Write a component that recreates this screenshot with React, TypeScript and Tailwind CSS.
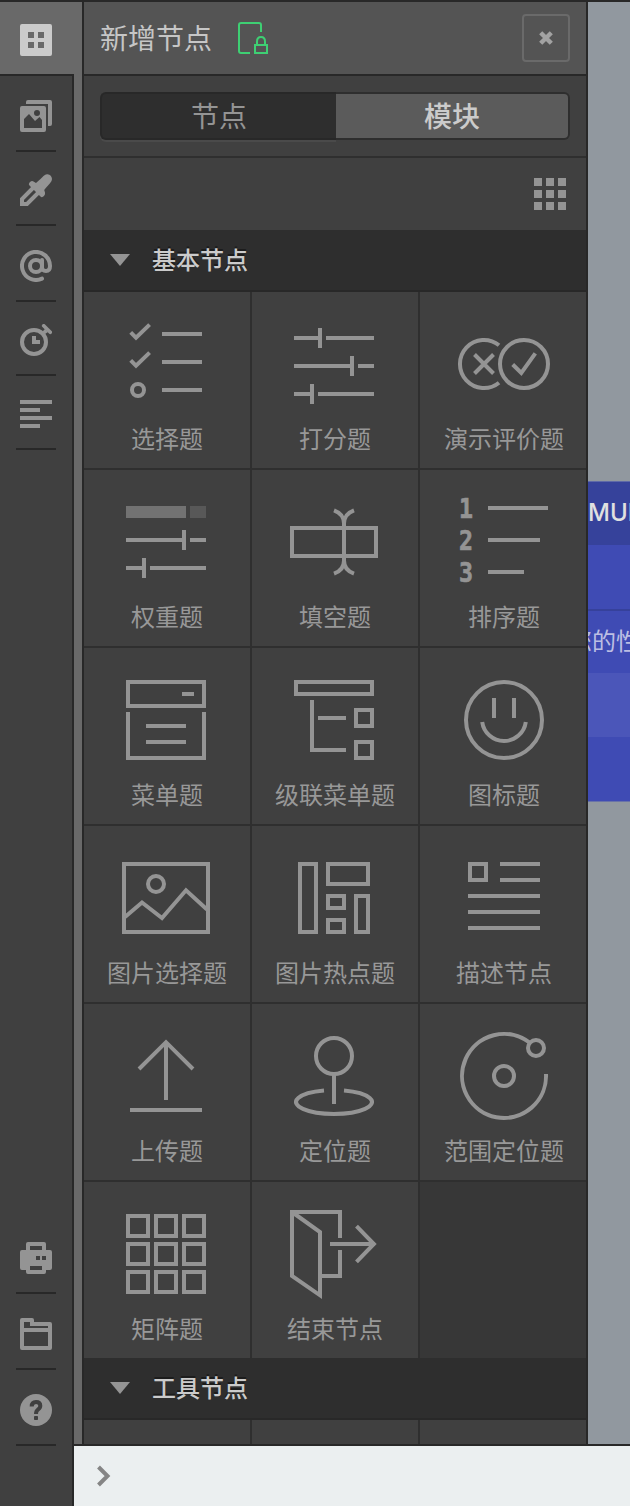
import React from "react";

const Stroke = ({ children }: { children: React.ReactNode }) => (
  <svg width="96" height="96" viewBox="0 0 96 96" fill="none" stroke="#949494" strokeWidth="4" className="block shrink-0">
    {children}
  </svg>
);

const matrix = [9, 37, 65];

const tiles: { label: string; icon: React.ReactNode }[] = [
  {
    label: "选择题",
    icon: (
      <>
        <path d="M11.7 16.4L17 21.6L30.6 8.6M11.7 44.4L17 49.6L30.6 36.6M43 18H83M43 46H83M43 74H83" />
        <circle cx="19" cy="74" r="6" />
      </>
    ),
  },
  {
    label: "打分题",
    icon: <path d="M7 22H33M33 12V32M39 22H87M7 50H65M65 40V60M71 50H87M7 78H25M25 68V88M31 78H87" />,
  },
  {
    label: "演示评价题",
    icon: (
      <>
        <path d="M44 29.3A24 24 0 1 0 44 66.7M19.5 38.5L38.5 57.5M38.5 38.5L19.5 57.5M57.7 48.5L66.3 57L80.3 37.3" />
        <circle cx="69" cy="48" r="24" />
      </>
    ),
  },
  {
    label: "权重题",
    icon: (
      <>
        <path d="M7 18H67" strokeWidth="12" stroke="#727272" />
        <path d="M71 18H87" strokeWidth="12" stroke="#585858" />
        <path d="M7 46H65M65 36V56M71 46H87M7 74H25M25 64V84M31 74H87" />
      </>
    ),
  },
  {
    label: "填空题",
    icon: (
      <>
        <rect x="5" y="34" width="84" height="28" />
        <path d="M47 16.3C53 18.5 57 22.5 57 29.5V66.5C57 73.5 53 77.5 47 79.7M67 16.3C61 18.5 57 22.5 57 29.5M67 79.7C61 77.5 57 73.5 57 66.5" />
      </>
    ),
  },
  {
    label: "排序题",
    icon: (
      <>
        <g fill="#949494" strokeWidth="0.7" fontFamily="'DejaVu Sans Mono', monospace" fontWeight="700" fontSize="27">
          <text x="4" y="24" textLength="14" lengthAdjust="spacingAndGlyphs">1</text>
          <text x="4" y="56" textLength="14" lengthAdjust="spacingAndGlyphs">2</text>
          <text x="4" y="88" textLength="14" lengthAdjust="spacingAndGlyphs">3</text>
        </g>
        <path d="M33 14H93M33 46H85M33 78H69" />
      </>
    ),
  },
  {
    label: "菜单题",
    icon: (
      <>
        <rect x="9" y="10" width="76" height="24" />
        <path d="M63 22H75M9 40V86H85V40M27 54H67M27 70H67" />
      </>
    ),
  },
  {
    label: "级联菜单题",
    icon: (
      <>
        <rect x="9" y="10" width="76" height="12" />
        <rect x="69" y="38" width="16" height="16" />
        <rect x="69" y="70" width="16" height="16" />
        <path d="M25 28V78H59M31 46H59" />
      </>
    ),
  },
  {
    label: "图标题",
    icon: (
      <>
        <circle cx="49" cy="48" r="38" />
        <path d="M39 26V46M59 26V46M27.2 50A22 22 0 0 0 70.8 50" />
      </>
    ),
  },
  {
    label: "图片选择题",
    icon: (
      <>
        <rect x="5" y="14" width="84" height="68" />
        <circle cx="37" cy="34" r="8" />
        <path d="M6 67L23 52.5L43 68L67 40.3L88 59.5" />
      </>
    ),
  },
  {
    label: "图片热点题",
    icon: (
      <>
        <rect x="13" y="14" width="16" height="68" />
        <rect x="41" y="14" width="40" height="20" />
        <rect x="41" y="46" width="16" height="12" />
        <rect x="41" y="70" width="16" height="12" />
        <rect x="69" y="46" width="12" height="36" />
      </>
    ),
  },
  {
    label: "描述节点",
    icon: (
      <>
        <rect x="15" y="14" width="16" height="16" />
        <path d="M45 14H85M45 30H85M13 46H85M13 62H85M13 78H85" />
      </>
    ),
  },
  {
    label: "上传题",
    icon: <path d="M20 41L47 14.2L74 41M47 14V72M11 82H83" />,
  },
  {
    label: "定位题",
    icon: (
      <>
        <circle cx="47" cy="28" r="18" />
        <path d="M47 46V76M37 62.4A38 12 0 1 0 57 62.4" />
      </>
    ),
  },
  {
    label: "范围定位题",
    icon: (
      <>
        <circle cx="49" cy="48" r="10" />
        <circle cx="81" cy="20" r="8" />
        <path d="M91 46A42 42 0 1 1 74.5 14.5" />
      </>
    ),
  },
  {
    label: "矩阵题",
    icon: (
      <>
        {matrix.map((x) => matrix.map((y) => <rect key={`${x}-${y}`} x={x} y={y + 1} width="20" height="20" />))}
      </>
    ),
  },
  {
    label: "结束节点",
    icon: (
      <>
        <path d="M5 6L33 26V89.3L5 70V4" />
        <path d="M3 6H53V32M53 44V70H35M43 38H86M69.5 20.2L86.9 38L69.5 55.8" />
      </>
    ),
  },
];

const SideIcon = ({ children }: { children: React.ReactNode }) => (
  <svg width="32" height="32" viewBox="0 0 32 32" fill="#949494" className="block">
    {children}
  </svg>
);

const SideItem = ({ tall, children }: { tall?: boolean; children: React.ReactNode }) => (
  <button
    className={
      tall
        ? "flex h-[76px] w-10 shrink-0 justify-center border-b-2 border-[#282828] pt-6"
        : "flex h-[74px] w-10 shrink-0 justify-center border-b-2 border-[#282828] pt-[22px]"
    }
  >
    <SideIcon>{children}</SideIcon>
  </button>
);

const SectionHeader = ({ title }: { title: string }) => (
  <div className="flex h-[62px] shrink-0 items-center border-b-2 border-[#282828] bg-[#2e2e2e] pl-[26px]">
    <svg width="20" height="12" viewBox="0 0 20 12" className="block">
      <path d="M0 0H20L10 12Z" fill="#949494" />
    </svg>
    <span className="ml-[22px] pb-0.5 text-2xl leading-[58px] font-medium text-[#cbcbcb] [text-shadow:0_-2px_0_#1c1c1c]">{title}</span>
  </div>
);

const Sidebar = () => (
  <nav className="flex w-[74px] shrink-0 flex-col bg-[#696969]">
    <div className="flex h-[74px] shrink-0 justify-start border-b-2 border-[#282828] bg-[#696969] pt-[22px] pl-5">
      <svg width="32" height="32" viewBox="0 0 32 32">
        <path
          fillRule="evenodd"
          fill="#cbcbcb"
          d="M2 0H30Q32 0 32 2V30Q32 32 30 32H2Q0 32 0 30V2Q0 0 2 0ZM8 8V14H14V8ZM18 8V14H24V8ZM8 18V24H14V18ZM18 18V24H24V18Z"
        />
      </svg>
    </div>
    <div className="flex grow flex-col items-center border-r-2 border-[#282828] bg-[#404040]">
      <SideItem tall>
        <path d="M6 4V2Q6 0 8 0H30Q32 0 32 2V24Q32 26 30 26H28V4Z" />
        <path
          fillRule="evenodd"
          d="M2 6H24Q26 6 26 8V30Q26 32 24 32H2Q0 32 0 30V8Q0 6 2 6ZM4 28H22V20L19.5 17L15 21L9 14L4 19ZM17 10A3 3 0 1 0 17 16A3 3 0 1 0 17 10Z"
        />
      </SideItem>
      <SideItem>
        <path d="M20.5 5L23.5 2Q25.5 0 27.5 0.3Q31.7 1 32 5Q32 7.2 30 9.2L25.8 14L24.2 16L25 18.5Q25.5 20 24 22Q22 24 20.5 22.5L9.5 11.5Q8 10 10 8Q12 6.3 13.5 7.5L16 9Z" />
        <path d="M13 14L2 25V30H7L18 19" fill="none" stroke="#949494" strokeWidth="4" />
      </SideItem>
      <SideItem tall>
        <circle cx="16" cy="16" r="6" fill="none" stroke="#949494" strokeWidth="4" />
        <path
          d="M22 10V17.5Q22.2 21 26 21Q30 21 30 16A14 14 0 1 0 22 28.6"
          fill="none"
          stroke="#949494"
          strokeWidth="4"
          strokeLinecap="round"
          strokeLinejoin="round"
        />
      </SideItem>
      <SideItem>
        <circle cx="14" cy="18" r="12" fill="none" stroke="#949494" strokeWidth="4" />
        <path d="M12 12H16V16H20V20H12ZM22.5 7.5L25 5L28 8L25 10Z" />
        <path d="M23.7 1.7L30.3 8.3" stroke="#949494" strokeWidth="3.6" strokeLinecap="round" />
      </SideItem>
      <SideItem>
        <path d="M0 2H32V6H0ZM0 10H20V14H0ZM0 18H32V22H0ZM0 26H20V30H0Z" />
      </SideItem>
      <div className="grow" />
      <SideItem tall>
        <path
          fillRule="evenodd"
          d="M8 0H24Q26 0 26 2V8H30Q32 8 32 10V26Q32 28 30 28H26V30Q26 32 24 32H8Q6 32 6 30V28H2Q0 28 0 26V10Q0 8 2 8H6V2Q6 0 8 0ZM10 4V8H22V4ZM16 14V18H20V14ZM22 14V18H26V14ZM10 24V28H22V24Z"
        />
      </SideItem>
      <SideItem tall>
        <path
          fillRule="evenodd"
          d="M2 0H12Q14 0 14 2V4H30Q32 4 32 6V30Q32 32 30 32H2Q0 32 0 30V2Q0 0 2 0ZM4 4V10H28V8H10V4ZM4 14V28H28V14Z"
        />
      </SideItem>
      <SideItem tall>
        <circle cx="16" cy="16" r="16" />
        <path d="M11.7 12.5Q11.7 8 16 8Q20.3 8 20.3 11.7Q20.3 14 18 15.5Q16 17 16 20" fill="none" stroke="#404040" strokeWidth="4" />
        <rect x="14" y="22" width="4" height="4" rx="0.8" fill="#404040" />
      </SideItem>
      <div className="h-[60px] shrink-0" />
    </div>
  </nav>
);

const Panel = () => (
  <section className="flex w-[506px] shrink-0 flex-col overflow-hidden border-x-2 border-[#282828] bg-[#404040]">
    <header className="flex h-[74px] shrink-0 items-center border-b-2 border-[#282828] bg-[#545454] px-4">
      <h1 className="pb-0.5 text-[28px] leading-[70px] text-[#c6c6c6]">新增节点</h1>
      <svg width="32" height="32" viewBox="0 0 32 32" fill="none" stroke="#3ecf73" strokeWidth="2" className="ml-[26px]">
        <path d="M12 31H3Q1 31 1 29V3Q1 1 3 1H21Q23 1 23 3V10" />
        <rect x="17" y="23" width="12" height="8" />
        <path d="M19 23V19.500Q19 15 23 15Q27 15 27 19.500V23" />
      </svg>
      <button className="ml-auto flex size-12 items-center justify-center rounded-sm border-2 border-[#6a6a6a]">
        <svg width="16" height="16" viewBox="0 0 16 16" stroke="#a2a2a2" strokeWidth="4.4">
          <path d="M2.700 2.700L13.300 13.300M13.300 2.700L2.700 13.300" />
        </svg>
      </button>
    </header>
    <div className="h-[82px] shrink-0 border-b-2 border-[#2f2f2f] px-4 pt-4">
      <div className="flex h-12 text-[28px] leading-[42px]">
        <button className="flex w-[236px] justify-center rounded-l-md border-2 border-r-0 border-[#282828] bg-[#2e2e2e] text-[#949494] shadow-[0_2px_0_#4a4a4a]">
          节点
        </button>
        <button className="flex w-[234px] justify-center rounded-r-md border-2 border-l-0 border-[#2e2e2e] bg-[#5b5b5b] font-medium text-[#cbcbcb]">
          模块
        </button>
      </div>
    </div>
    <div className="flex h-[72px] shrink-0 items-center justify-end pr-5">
      <div className="grid grid-cols-3 gap-1">
        {Array.from({ length: 9 }, (_, i) => (
          <span key={i} className="size-2 bg-[#949494]" />
        ))}
      </div>
    </div>
    <SectionHeader title="基本节点" />
    <div className="grid shrink-0 grid-cols-[166px_166px_166px] auto-rows-[176px] gap-[2px] bg-[#2f2f2f]">
      {tiles.map((tile, i) => (
        <button key={tile.label} className="flex flex-col items-center bg-[#404040] pt-6">
          <Stroke>{tile.icon}</Stroke>
          <span
            className={
              i % 3 === 2
                ? "mt-2 pl-0.5 text-2xl leading-9 whitespace-nowrap text-[#989898]"
                : "mt-2 text-2xl leading-9 whitespace-nowrap text-[#989898]"
            }
          >
            {tile.label}
          </span>
        </button>
      ))}
      <div className="bg-[#373737]" />
    </div>
    <SectionHeader title="工具节点" />
    <div className="grid h-6 shrink-0 grid-cols-[166px_166px_166px] gap-[2px] bg-[#2f2f2f]">
      <div className="bg-[#404040]" />
      <div className="bg-[#404040]" />
      <div className="bg-[#404040]" />
    </div>
  </section>
);

const Canvas = () => (
  <div className="flex min-w-0 grow flex-col overflow-hidden bg-[#91989f] pt-[479px] whitespace-nowrap">
    <div className="flex h-16 shrink-0 items-center border-t border-[#5f6aa8] bg-[#36429b] pb-0.5 font-[Inter,sans-serif] text-2xl font-medium text-[#e0e0e0]">
      MUL
    </div>
    <div className="h-16 shrink-0 bg-[#3f4bb4]" />
    <div className="h-16 shrink-0 border-t-2 border-[#36419b] bg-[#3f4bb4]">
      <span className="-ml-5 text-2xl leading-[58px] text-[#bcbfe3]">您的性别</span>
    </div>
    <div className="h-16 shrink-0 bg-[#4b56b9]" />
    <div className="h-[65px] shrink-0 border-b border-[#6973a8] bg-[#3f4bb4]" />
  </div>
);

export default function App() {
  return (
    <div className="flex h-[1506px] w-[630px] overflow-hidden border-t-2 border-[#282828] font-['Noto_Sans_CJK_SC',sans-serif]">
      <Sidebar />
      <div className="flex min-w-0 grow flex-col">
        <div className="flex h-[1442px] shrink-0">
          <div className="w-2 shrink-0 bg-[#696969]" />
          <Panel />
          <Canvas />
        </div>
        <footer className="flex h-[62px] shrink-0 items-center border-t-2 border-[#282828] bg-[#ebeff0] pl-[22px]">
          <svg width="16" height="22" viewBox="0 0 16 22" fill="none" stroke="#858585" strokeWidth="4">
            <path d="M2.500 2L11.500 11L2.500 20" />
          </svg>
        </footer>
      </div>
    </div>
  );
}
